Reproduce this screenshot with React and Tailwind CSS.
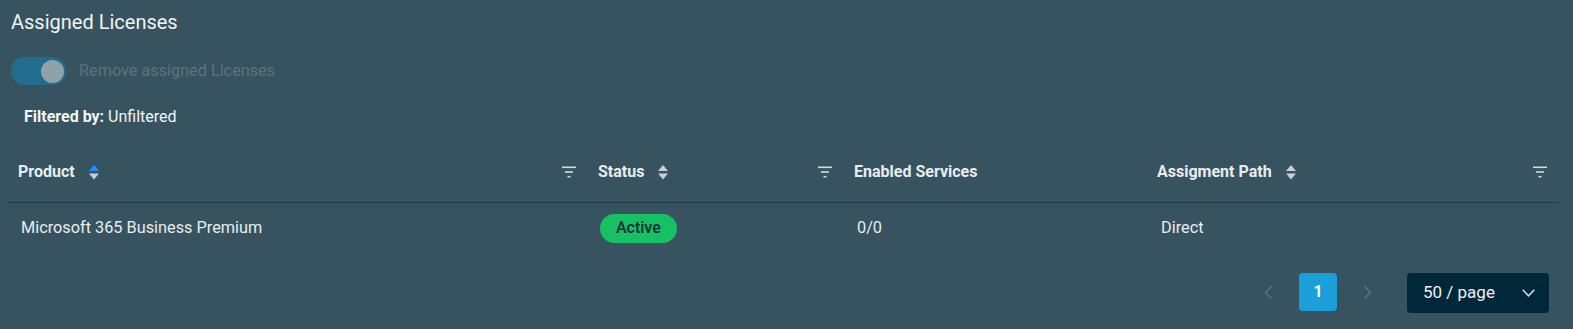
import React from 'react';

const SortIcon = ({ up = false }) => (
  <svg width="10" height="16" viewBox="0 0 10 16" className="ml-[14px] shrink-0">
    <path d="M5 1 L10 7 L0 7 Z" fill={up ? '#1890ff' : '#c8cfd3'} />
    <path d="M0 9.5 L10 9.5 L5 15.5 Z" fill="#c8cfd3" />
  </svg>
);

const FilterIcon = () => (
  <svg width="14" height="12" viewBox="0 0 14 12" className="shrink-0">
    <rect x="0" y="0.5" width="14" height="1.6" fill="#d5dadd" />
    <rect x="3" y="5.2" width="8" height="1.6" fill="#d5dadd" />
    <rect x="5.5" y="9.9" width="3" height="1.6" fill="#d5dadd" />
  </svg>
);

const columns = [
  { title: 'Product', sort: true, active: true, filter: true },
  { title: 'Status', sort: true, filter: true },
  { title: 'Enabled Services' },
  { title: 'Assigment Path', sort: true, filter: true },
];

const rows = [
  { product: 'Microsoft 365 Business Premium', status: 'Active', services: '0/0', path: 'Direct' },
];

const App = () => {
  return (
    <div className="w-full h-[329px] bg-[#37535f] text-[#e9edef] font-['Roboto',sans-serif] overflow-hidden">
      <div className="pl-[11px] pt-[8px] text-[20px] leading-[28px] text-[#f2f4f5]">Assigned Licenses</div>

      <div className="flex items-center pl-[11px] mt-[21px]">
        <div className="w-[55px] h-[28px] rounded-full bg-[#216d8e] flex items-center justify-end pr-[2px]">
          <div className="w-[23px] h-[23px] rounded-full bg-[#8fa1a9]" />
        </div>
        <span className="ml-[13px] text-[16.25px] text-[#5d717b]">Remove assigned Licenses</span>
      </div>

      <div className="pl-[24px] mt-[20px] text-[16px] leading-[24px] text-[#f2f4f5]">
        <span className="font-bold">Filtered by:</span> Unfiltered
      </div>

      <div className="ml-[8px] mr-[14px] mt-[13px]">
        <div className="grid grid-cols-[580px_256px_303px_1fr] h-[61px] border-b border-[#1d3c4a] text-[16px] font-bold">
          {columns.map((c) => (
            <div key={c.title} className="flex items-center pl-[10px] pr-[12px]">
              <span>{c.title}</span>
              {c.sort && <SortIcon up={c.active} />}
              <div className="flex-1" />
              {c.filter && <FilterIcon />}
            </div>
          ))}
        </div>
        {rows.map((r) => (
          <div key={r.product} className="grid grid-cols-[580px_256px_303px_1fr] h-[50px] text-[16.3px]">
            <div className="flex items-center pl-[13px]">{r.product}</div>
            <div className="flex items-center pl-[12px]">
              <span className="bg-[#17c063] text-[#0b2b36] rounded-full px-[16px] h-[29px] flex items-center text-[16px] font-medium">
                {r.status}
              </span>
            </div>
            <div className="flex items-center pl-[13px]">{r.services}</div>
            <div className="flex items-center pl-[14px]">{r.path}</div>
          </div>
        ))}
      </div>

      <div className="flex items-start justify-end pr-[24px] mt-[20px]">
        <svg width="9" height="13" viewBox="0 0 9 13" className="mr-[26px] mt-[13px]">
          <path d="M7.5 0.5 L1.5 6.5 L7.5 12.5" stroke="#5f7580" strokeWidth="1.4" fill="none" />
        </svg>
        <div className="w-[38px] h-[38px] rounded-[4px] bg-[#1b9fdb] flex items-center justify-center text-white text-[16px] font-bold">
          1
        </div>
        <svg width="9" height="13" viewBox="0 0 9 13" className="ml-[26px] mr-[35px] mt-[13px]">
          <path d="M1.5 0.5 L7.5 6.5 L1.5 12.5" stroke="#5f7580" strokeWidth="1.4" fill="none" />
        </svg>
        <div className="w-[142px] h-[40px] rounded-[4px] bg-[#00283a] flex items-center justify-between pl-[16px] pr-[14px] text-[17px] text-[#eef1f3]">
          <span>50 / page</span>
          <svg width="13" height="8" viewBox="0 0 13 8">
            <path d="M0.7 0.7 L6.5 6.8 L12.3 0.7" stroke="#d5dadd" strokeWidth="1.5" fill="none" />
          </svg>
        </div>
      </div>
    </div>
  );
};

export default App;
